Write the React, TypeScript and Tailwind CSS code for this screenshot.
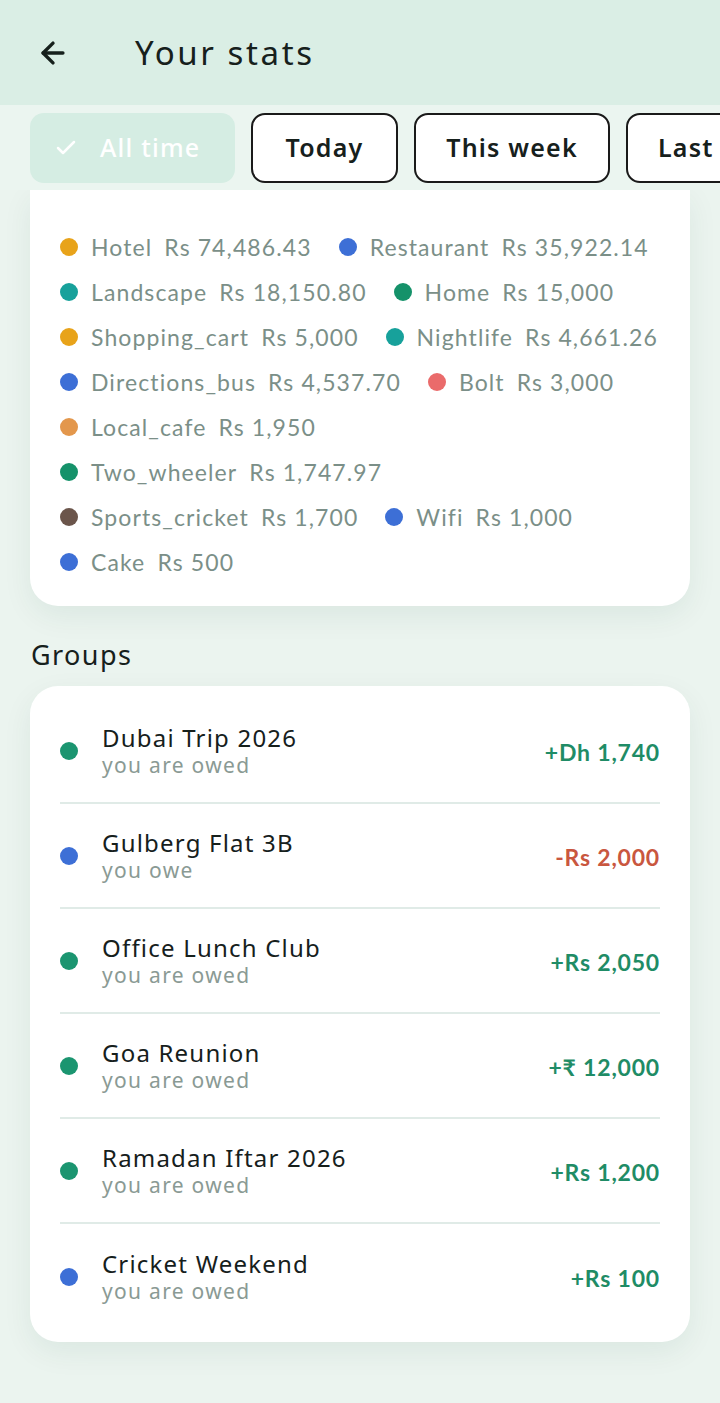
import React from "react";
import { ArrowLeft, Check } from "lucide-react";

type Item = { label: string; amount: string; color: string };

const legendRows: Item[][] = [
  [
    { label: "Hotel", amount: "Rs 74,486.43", color: "bg-[#e8a31a]" },
    { label: "Restaurant", amount: "Rs 35,922.14", color: "bg-[#3d6fd6]" },
  ],
  [
    { label: "Landscape", amount: "Rs 18,150.80", color: "bg-[#17a19b]" },
    { label: "Home", amount: "Rs 15,000", color: "bg-[#15926a]" },
  ],
  [
    { label: "Shopping_cart", amount: "Rs 5,000", color: "bg-[#e8a31a]" },
    { label: "Nightlife", amount: "Rs 4,661.26", color: "bg-[#17a19b]" },
  ],
  [
    { label: "Directions_bus", amount: "Rs 4,537.70", color: "bg-[#3d6fd6]" },
    { label: "Bolt", amount: "Rs 3,000", color: "bg-[#ea6b6b]" },
  ],
  [{ label: "Local_cafe", amount: "Rs 1,950", color: "bg-[#e3974c]" }],
  [{ label: "Two_wheeler", amount: "Rs 1,747.97", color: "bg-[#15926a]" }],
  [
    { label: "Sports_cricket", amount: "Rs 1,700", color: "bg-[#6b554b]" },
    { label: "Wifi", amount: "Rs 1,000", color: "bg-[#3d6fd6]" },
  ],
  [{ label: "Cake", amount: "Rs 500", color: "bg-[#3d6fd6]" }],
];

const groups = [
  { name: "Dubai Trip 2026", sub: "you are owed", amount: "+Dh 1,740", owe: false, dot: "bg-[#1b9570]" },
  { name: "Gulberg Flat 3B", sub: "you owe", amount: "-Rs 2,000", owe: true, dot: "bg-[#3d6fd6]" },
  { name: "Office Lunch Club", sub: "you are owed", amount: "+Rs 2,050", owe: false, dot: "bg-[#1b9570]" },
  { name: "Goa Reunion", sub: "you are owed", amount: "+₹ 12,000", owe: false, dot: "bg-[#1b9570]" },
  { name: "Ramadan Iftar 2026", sub: "you are owed", amount: "+Rs 1,200", owe: false, dot: "bg-[#1b9570]" },
  { name: "Cricket Weekend", sub: "you are owed", amount: "+Rs 100", owe: false, dot: "bg-[#3d6fd6]" },
];

const chip =
  "h-[70px] shrink-0 rounded-[14px] border-2 border-[#1a1a1a] bg-white flex items-center text-[25px] font-semibold tracking-[1.2px]";

export default function App() {
  return (
    <div className="w-[720px] h-[1403px] overflow-hidden bg-[#ebf4ef] font-['Noto_Sans',sans-serif] text-[#16201c]">
      {/* header */}
      <div className="h-[105px] bg-[#daeee5] flex items-center pl-[36px]">
        <ArrowLeft size={34} strokeWidth={2.4} className="text-[#16201c]" />
        <h1 className="ml-[65px] text-[33px] tracking-[2.6px] leading-none">Your stats</h1>
      </div>

      {/* filter chips */}
      <div className="relative z-10 h-[85px] bg-[#ebf5f0] flex items-center gap-[16px] pl-[30px] pt-[1px] whitespace-nowrap">
        <div className="h-[70px] w-[205px] shrink-0 rounded-[14px] bg-[#d5ede3] flex items-center pl-[24px] gap-[22px] text-white">
          <Check size={24} strokeWidth={2.5} />
          <span className="text-[25px] font-medium tracking-[1.2px]">All time</span>
        </div>
        <div className={`${chip} w-[147px] justify-center`}>Today</div>
        <div className={`${chip} w-[196px] justify-center`}>This week</div>
        <div className={`${chip} w-[150px] pl-[30px]`}>Last month</div>
      </div>

      <div className="px-[30px]">
        {/* category legend card, top scrolled under the chips */}
        <div className="bg-white rounded-b-[28px] pt-[42px] pb-[29px] px-[30px] flex flex-col gap-[15px] shadow-[0_10px_30px_rgba(20,70,50,0.07)] font-['Lato',sans-serif]">
          {legendRows.map((row, i) => (
            <div key={i} className="flex items-center gap-[27px] h-[30px]">
              {row.map((it) => (
                <div key={it.label} className="flex items-center whitespace-nowrap text-[23px] tracking-[1.1px] text-[#7b8f88]">
                  <span className={`w-[18px] h-[18px] rounded-full ${it.color} mr-[13px]`} />
                  <span>{it.label}</span>
                  <span className="ml-[12px]">{it.amount}</span>
                </div>
              ))}
            </div>
          ))}
        </div>

        <h2 className="mt-[34px] pl-[1px] text-[27px] leading-[30px] tracking-[1.4px]">Groups</h2>

        {/* groups card */}
        <div className="mt-[16px] bg-white rounded-[28px] py-[13px] shadow-[0_10px_30px_rgba(20,70,50,0.07)]">
          {groups.map((g, i) => (
            <div
              key={g.name}
              className={`mx-[30px] h-[105px] flex items-center ${i < groups.length - 1 ? "border-b-2 border-[#e0ebe7]" : ""}`}
            >
              <span className={`w-[18px] h-[18px] rounded-full ${g.dot} shrink-0`} />
              <div className="ml-[24px] flex flex-col">
                <span className="text-[24px] leading-[28px] tracking-[1.2px]">{g.name}</span>
                <span className="text-[21px] leading-[26px] text-[#8a9a94] tracking-[1.3px]">{g.sub}</span>
              </div>
              <span
                className={`ml-auto mt-[4px] font-['Lato',sans-serif] text-[23px] font-bold tracking-[0.8px] ${g.owe ? "text-[#c9573f]" : "text-[#1f8c66]"}`}
              >
                {g.amount}
              </span>
            </div>
          ))}
        </div>
      </div>
    </div>
  );
}
